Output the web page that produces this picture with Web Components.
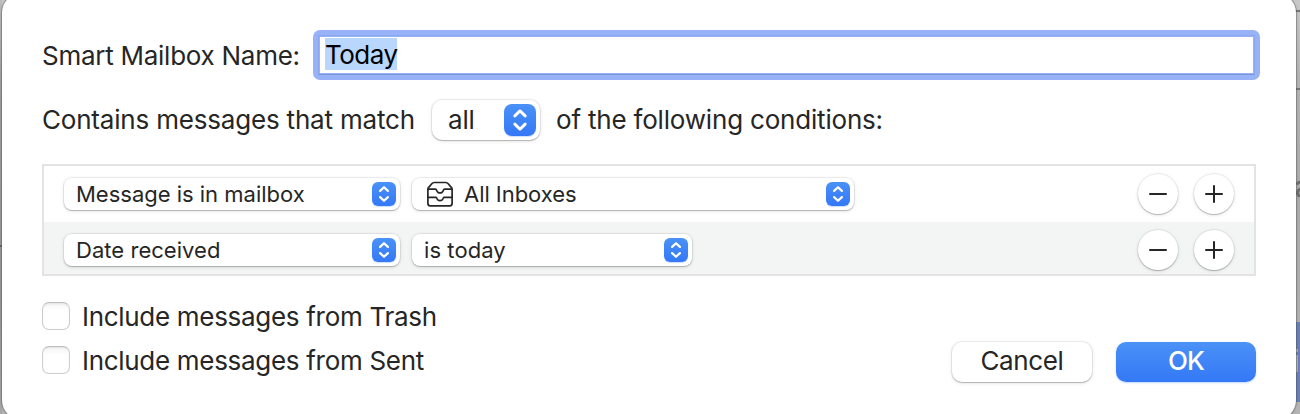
<!DOCTYPE html>
<html lang="en">
<head>
<meta charset="utf-8">
<title>Smart Mailbox</title>
<style>
html,body{margin:0;height:414px;overflow:hidden}
body{font-family:Inter,"Liberation Sans",sans-serif;color:#262626;background:#b0b0b0}
</style>
</head>
<body>
<mail-backdrop>
<smart-sheet>
  <name-row></name-row>
  <match-row></match-row>
  <rule-table>
    <rule-row>
      <pop-up style="width:336px;--ls:-.01px">Message is in mailbox</pop-up>
      <pop-up style="width:442px;--ls:-.04px"><inbox-icon slot="icon"></inbox-icon>All Inboxes</pop-up>
    </rule-row>
    <rule-row class="alt">
      <pop-up style="width:336px;--ls:.04px">Date received</pop-up>
      <pop-up style="width:280px;--ls:.08px">is today</pop-up>
    </rule-row>
  </rule-table>
  <sheet-footer>
    <check-box>Include messages from Trash</check-box>
    <check-box>Include messages from Sent</check-box>
    <push-button slot="actions">Cancel</push-button>
    <push-button slot="actions" primary>OK</push-button>
  </sheet-footer>
</smart-sheet>
</mail-backdrop>
<script>
function define(name, html) {
  const t = document.createElement('template');
  t.innerHTML = html;
  customElements.define(name, class extends HTMLElement {
    constructor() {
      super();
      this.attachShadow({mode: 'open'}).append(t.content.cloneNode(true));
    }
  });
}

/* Dimmed mail window, visible at both sides of the sheet */
define('mail-backdrop', `<style>
:host{display:block;position:relative;height:414px;overflow:hidden;background:linear-gradient(#c8c8c8,#b4b4b4 80px,#acacac 200px,#b4b4b4)}
.left{position:absolute;left:0;top:0;width:2px;height:414px;background:linear-gradient(#bcbcbc,#a0a0a0 90px,#999 300px,#a8a8a8)}
.left i{position:absolute;left:0;top:245px;width:2px;height:2px;background:#666}
.right{position:absolute;left:1296px;top:0;width:4px;height:414px;overflow:hidden}
.line{position:absolute;left:0;width:4px;height:2px;background:#777}
.sel{position:absolute;left:0;top:322px;width:4px;height:80px;background:#6a80bb}
.sel i{position:absolute;left:0;width:2px;background:#adafb5}
svg{position:absolute;left:0;top:180px}
</style>
<div class="left"><i></i></div>
<div class="right"><div class="line" style="top:10px"></div><div class="line" style="top:88px"></div>
<svg width="4" height="20"><path d="M.5 4.5Q2 2.200 5 2M5 9Q1.500 9.500 1.500 13Q2 16 5 16" fill="none" stroke="#707070" stroke-width="3"/></svg>
<div class="sel"><i style="top:27px;height:3px"></i><i style="top:33px;height:17px"></i></div></div>
<slot></slot>`);

define('smart-sheet', `<style>
:host{display:flex;flex-direction:column;position:relative;box-sizing:border-box;width:1294px;height:427px;margin:-7px 0 0 2px;padding:37px 36px 0 40px;border-radius:20px;background:#fff;box-shadow:0 0 0 1px rgba(90,90,90,.35),0 0 3px rgba(0,0,0,.3)}
</style><slot></slot>`);

define('name-row', `<style>
:host{display:flex;align-items:center;height:50px;font-size:26px}
label{width:271px;white-space:nowrap;letter-spacing:-.26px}
.field{box-sizing:border-box;width:947px;height:50px;border:7px solid #97b2f6;border-radius:7px;background:#fff;padding:1px 5px;color:#000;position:relative}
.field::before{content:"";position:absolute;inset:-2px;border:1px solid #8ba7f0;border-bottom-color:#7895da}
mark{display:block;width:72px;height:32px;line-height:34px;background:#b9d6fd;color:#000;letter-spacing:-.5px;white-space:nowrap}
</style><label>Smart Mailbox Name:</label><div class="field"><mark>Today</mark></div>`);

const arrows = `<svg viewBox="0 0 24 24" fill="none" stroke="#fff" stroke-width="2.200" stroke-linecap="round" stroke-linejoin="round"><path d="M8.100 8.900L12 5.200l3.900 3.700M8.100 15.100L12 18.800l3.900-3.700"/></svg>`;
const blue = 'linear-gradient(#4a91f7,#3478f6)';
const lift = '0 0 0 1px rgba(0,0,0,.055),0 1px 1px rgba(0,0,0,.2),0 1px 4px rgba(0,0,0,.11)';

define('match-row', `<style>
:host{display:flex;align-items:center;height:40px;margin-top:20px;font-size:26px;white-space:nowrap}
.a{width:390px}
.a,.b{letter-spacing:-.19px;padding-bottom:2px}
.b{margin-left:16px}
pop-up{width:108px;height:40px;border-radius:10px;font-size:26px;padding:0 4px 0 16px;--b:32px;--r:8px;--lift:2px;--ls:-.2px}
</style><span class="a">Contains messages that match</span><pop-up>all</pop-up><span class="b">of the following conditions:</span>`);

define('pop-up', `<style>
:host{display:flex;align-items:center;box-sizing:border-box;height:32px;border-radius:8px;padding:0 4px 0 12px;background:#fff;box-shadow:${lift};font-size:22px;white-space:nowrap}
.t{flex:1;letter-spacing:var(--ls,0);padding-bottom:var(--lift,0)}
.b{width:var(--b,24px);height:var(--b,24px);border-radius:var(--r,6px);background:${blue};box-shadow:0 1px 1px rgba(52,120,246,.25)}
svg{display:block}
</style><slot name="icon"></slot><span class="t"><slot></slot></span><span class="b">${arrows}</span>`);

define('inbox-icon', `<style>:host{display:block;width:26px;height:26px;margin:0 11px 0 3px}svg{display:block}</style>
<svg width="26" height="26" viewBox="0 0 26 26" fill="none" stroke="#262626" stroke-width="1.700" stroke-linecap="round" stroke-linejoin="round"><path d="M.9 8.200Q.9 7.300 1.500 6.600L4.800 2.700Q5.800 1.500 7.200 1.500H18.800Q20.200 1.500 21.200 2.700L24.500 6.600Q25.100 7.300 25.100 8.200V22.600Q25.100 24.900 22.800 24.900H3.200Q.9 24.900 .9 22.600Z"/><path d="M1.500 8.200H8.400Q9.300 8.200 9.700 9.400Q10.500 11.900 13 11.900T16.300 9.400Q16.700 8.200 17.600 8.200H24.500M1 16.400H8.800Q9.500 16.400 9.800 17.300Q10.700 19.700 13 19.700T16.200 17.300Q16.500 16.400 17.200 16.400H25"/></svg>`);

define('rule-table', `<style>:host{display:block;box-sizing:border-box;width:1214px;height:112px;margin-top:24px;border:2px solid #e3e3e3;overflow:hidden}</style><slot></slot>`);

define('rule-row', `<style>
:host{display:flex;align-items:flex-start;box-sizing:border-box;height:56px;padding:8px 20px}
:host(.alt){background:#f3f5f4}
.p{display:flex;gap:12px;margin-top:4px;flex:1}
.c{display:flex;gap:16px}
span{width:40px;height:40px;border-radius:50%;background:#fff;box-shadow:${lift}}
svg{display:block;stroke:#262626;stroke-width:2;stroke-linecap:round}
</style><div class="p"><slot></slot></div><div class="c"><span><svg width="40" height="40"><path d="M12 20H28"/></svg></span><span><svg width="40" height="40"><path d="M12 20H28M20 12V28"/></svg></span></div>`);

define('sheet-footer', `<style>
:host{display:flex;justify-content:space-between;align-items:flex-end;height:80px;margin:26px 2px 0 0;width:1214px}
.l{display:grid;gap:16px;align-self:flex-start}.r{display:flex;gap:24px}
</style><div class="l"><slot></slot></div><div class="r"><slot name="actions"></slot></div>`);

define('check-box', `<style>
:host{display:flex;align-items:center;height:28px;gap:12px;font-size:26px;white-space:nowrap;letter-spacing:-.3px}
i{box-sizing:border-box;width:28px;height:28px;border:1px solid #cdcdcd;border-top-color:#bcbcbc;border-radius:7px;background:linear-gradient(#f5f5f5,#fff 8px);box-shadow:inset 0 1px 2px rgba(0,0,0,.08)}
</style><i></i><span><slot></slot></span>`);

define('push-button', `<style>
:host{display:flex;align-items:center;justify-content:center;box-sizing:border-box;width:140px;height:40px;padding-bottom:3px;border-radius:10px;background:#fff;box-shadow:${lift};font-size:26px;letter-spacing:-.35px}
:host([primary]){background:${blue};color:#fff;font-weight:500;letter-spacing:-.8px;box-shadow:0 1px 2px rgba(52,120,246,.3)}
</style><slot></slot>`);
</script>
</body>
</html>
